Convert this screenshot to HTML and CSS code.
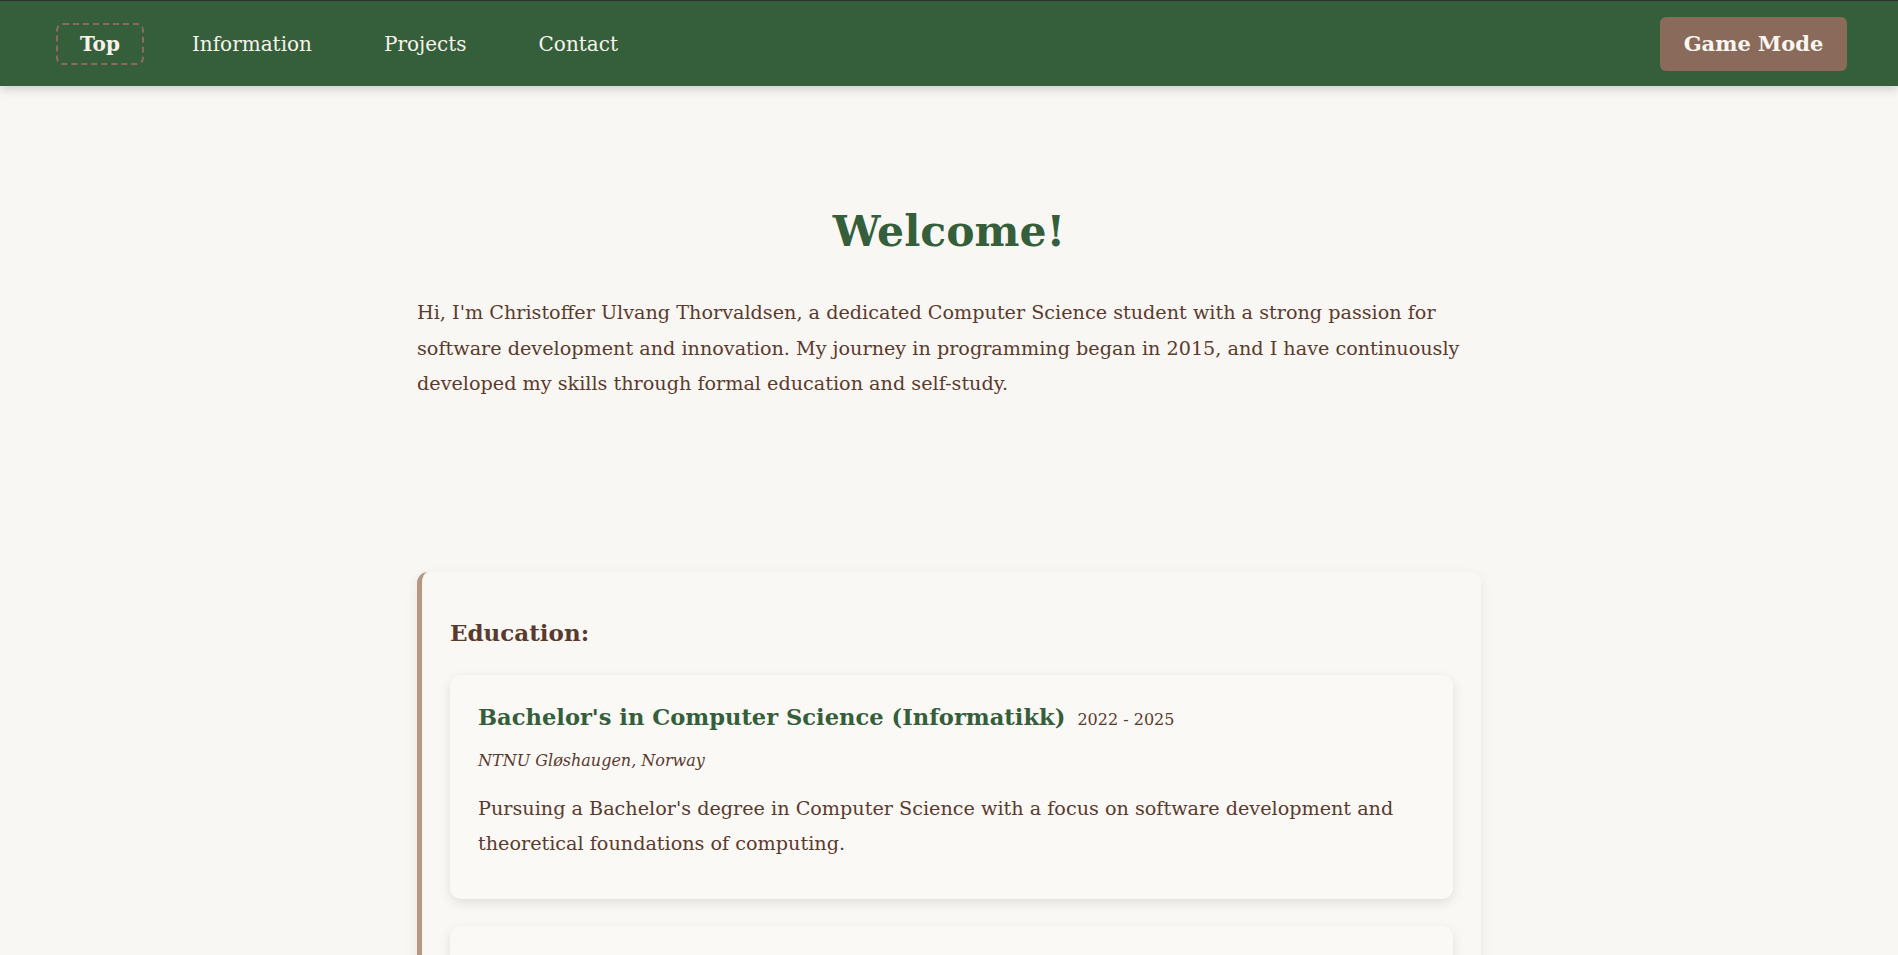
FILE: index.html
```html
<!DOCTYPE html>
<html lang="en">
<head>
<meta charset="utf-8">
<title>Christoffer Ulvang Thorvaldsen</title>
<link rel="stylesheet" href="styles.css">
</head>
<body>
<nav class="topbar">
  <ul class="nav-links">
    <li><a class="nav-link active" href="#top">Top</a></li>
    <li><a class="nav-link" href="#information">Information</a></li>
    <li><a class="nav-link" href="#projects">Projects</a></li>
    <li><a class="nav-link" href="#contact">Contact</a></li>
  </ul>
  <button class="game-btn" type="button">Game Mode</button>
</nav>
<main class="container">
  <section class="intro">
    <h1 class="welcome">Welcome!</h1>
    <p class="intro-text">Hi, I'm Christoffer Ulvang Thorvaldsen, a dedicated Computer Science student with a strong passion for software development and innovation. My journey in programming began in 2015, and I have continuously developed my skills through formal education and self-study.</p>
  </section>
  <section class="panel">
    <h2 class="panel-title">Education:</h2>
    <article class="entry">
      <div class="entry-head">
        <h3 class="entry-title">Bachelor's in Computer Science (Informatikk)</h3>
        <span class="entry-date">2022 - 2025</span>
      </div>
      <p class="entry-place">NTNU Gløshaugen, Norway</p>
      <p class="entry-desc">Pursuing a Bachelor's degree in Computer Science with a focus on software development and theoretical foundations of computing.</p>
    </article>
    <article class="entry">
      <div class="entry-head">
        <h3 class="entry-title">Upper Secondary School</h3>
        <span class="entry-date">2018 - 2021</span>
      </div>
      <p class="entry-place">Norway</p>
      <p class="entry-desc">General studies with a focus on mathematics and science.</p>
    </article>
  </section>
</main>
</body>
</html>
```
FILE: styles.css
```css
* { box-sizing: border-box; }
html, body { margin: 0; padding: 0; }
body {
  background: #f9f7f3;
  color: #5b3a2e;
  font-family: "DejaVu Serif", "Liberation Serif", serif;
  overflow: hidden;
}
.topbar {
  height: 86px;
  border-top: 1px solid #2e3132;
  background: #355e3b;
  display: flex;
  align-items: center;
  justify-content: space-between;
  padding: 0 51px 0 56px;
  box-shadow: 0 3px 10px rgba(0, 0, 0, 0.18);
  position: relative;
  z-index: 2;
}
.nav-links {
  list-style: none;
  margin: 0;
  padding: 0;
  display: flex;
  gap: 24px;
}
.nav-link {
  display: block;
  height: 42px;
  line-height: 38px;
  padding: 0 22px;
  border: 2px dashed transparent;
  border-radius: 7px;
  color: #f7f3ea;
  text-decoration: none;
  font-size: 20px;
}
.nav-link.active {
  border-color: #8d6b5c;
  font-weight: bold;
}
.game-btn {
  height: 54px;
  width: 187px;
  border: none;
  border-radius: 6px;
  background: #8a6a5a;
  color: #fbf7f0;
  font-family: inherit;
  font-size: 21px;
  font-weight: bold;
}
.container {
  width: 1064px;
  margin: 0 auto;
}
.intro {
  padding-top: 118px;
}
.welcome {
  margin: 0;
  text-align: center;
  color: #355e3b;
  font-size: 42.5px;
  line-height: 1.3;
}
.intro-text {
  margin: 36px 0 0;
  font-size: 19.2px;
  line-height: 35.5px;
}
.panel {
  margin-top: 170px;
  background: #faf8f5;
  border-left: 5px solid #b49883;
  border-radius: 11px;
  padding: 44px 28px 28px;
  box-shadow: 0 4px 14px rgba(0, 0, 0, 0.07);
}
.panel-title {
  margin: 0 0 25px;
  font-size: 23px;
  line-height: 1.5;
}
.entry {
  background: #faf9f6;
  border-radius: 11px;
  padding: 27px 28px 37px;
  margin-bottom: 27px;
  box-shadow: 0 4px 12px rgba(0, 0, 0, 0.1);
}
.entry-head {
  display: flex;
  align-items: baseline;
  gap: 12px;
}
.entry-title {
  margin: 0;
  color: #355e3b;
  font-size: 22.6px;
  line-height: 1.4;
}
.entry-date {
  font-size: 16px;
}
.entry-place {
  margin: 15px 0 0;
  font-style: italic;
  font-size: 16px;
  line-height: 1.5;
}
.entry-desc {
  margin: 18px 0 0;
  font-size: 19.2px;
  line-height: 35.5px;
}
```
